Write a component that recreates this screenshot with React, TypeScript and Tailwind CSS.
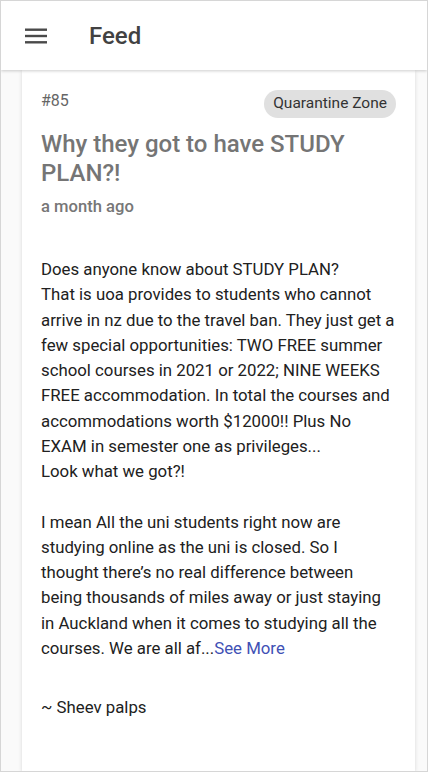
import React from "react";

export default function App() {
  const font = { fontFamily: "Roboto, 'Liberation Sans', sans-serif" };
  return (
    <div
      className="w-[428px] h-[772px] overflow-hidden border border-[#d6d6d6] bg-[#fafafa] flex flex-col"
      style={font}
    >
      <header className="relative z-10 h-[69px] shrink-0 bg-white flex items-center shadow-[0_1px_3px_rgba(0,0,0,0.2)]">
        <svg width="22" height="16" viewBox="0 0 22 16" className="ml-[24px]" fill="#4a4a4a">
          <rect x="0" y="0.5" width="22" height="2.4" />
          <rect x="0" y="6.8" width="22" height="2.4" />
          <rect x="0" y="13.1" width="22" height="2.4" />
        </svg>
        <h1 className="ml-[42px] text-[24px] font-medium text-[#424242] leading-none">Feed</h1>
      </header>
      <main className="flex-1 min-h-0 pl-[21px] pr-[12px]">
        <article className="h-full bg-white shadow-[0_1px_4px_rgba(0,0,0,0.14)] pl-[19px] pr-[19px] pt-[20px]">
          <div className="flex items-start justify-between">
            <span className="text-[16px] text-[#666] leading-[20px] mt-[1px]">#85</span>
            <span className="h-[28px] px-[9px] rounded-full bg-[#e0e0e0] text-[15.5px] text-[#333] flex items-center">
              Quarantine Zone
            </span>
          </div>
          <h2 className="mt-[12px] text-[24px] font-medium text-[#757575] leading-[29px]">
            Why they got to have STUDY PLAN?!
          </h2>
          <p className="mt-[9px] text-[16.6px] font-medium text-[#777] leading-[20px]">a month ago</p>
          <div className="mt-[40px] text-[16.8px] text-[#212121] leading-[25.25px] whitespace-pre-wrap">
            {"Does anyone know about STUDY PLAN?\nThat is uoa provides to students who cannot arrive in nz due to the travel ban. They just get a few special opportunities: TWO FREE summer school courses in 2021 or 2022; NINE WEEKS FREE accommodation. In total the courses and accommodations worth $12000!! Plus No EXAM in semester one as privileges...\nLook what we got?!\n\nI mean All the uni students right now are studying online as the uni is closed. So I thought there\u2019s no real difference between being thousands of miles away or just staying in Auckland when it comes to studying all the courses. We are all af..."}
            <span className="text-[#3f51b5]">See More</span>
          </div>
          <p className="mt-[34px] text-[16.8px] text-[#212121] leading-[25.25px]">~ Sheev palps</p>
        </article>
      </main>
    </div>
  );
}
